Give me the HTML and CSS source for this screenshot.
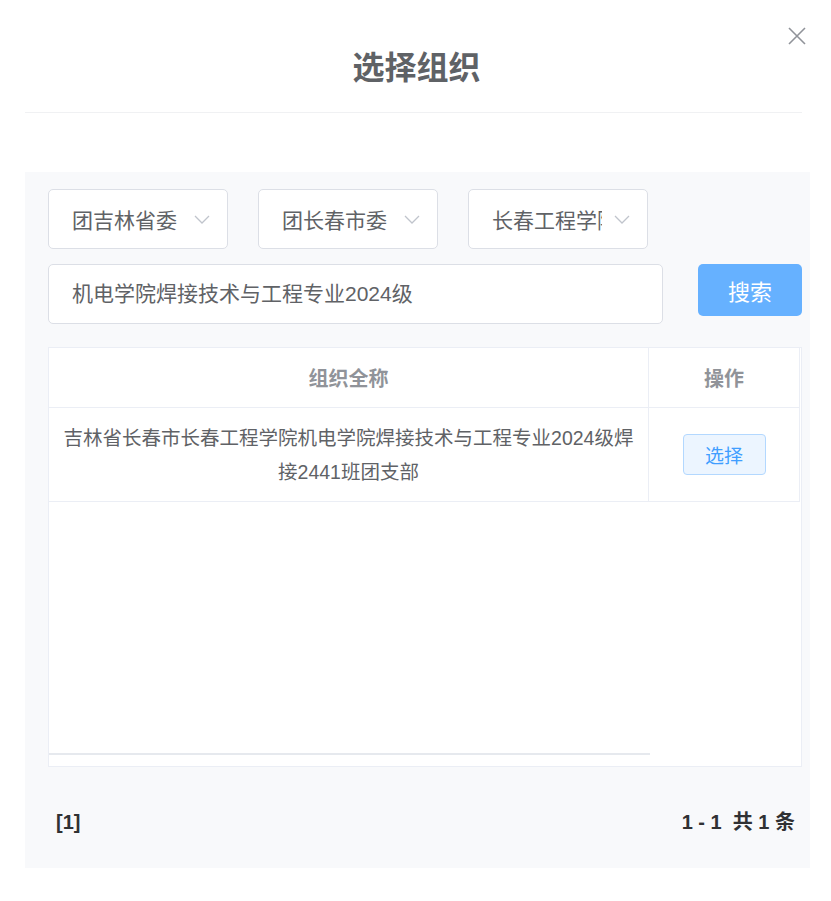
FILE: index.html
```html
<!DOCTYPE html>
<html lang="zh-CN">
  <head>
    <meta charset="UTF-8">
    <meta name="viewport" content="width=device-width, initial-scale=1.0">
    <title>选择组织</title>
    <link rel="stylesheet" href="styles.css">
  </head>
  <body>
    <div class="dialog">
        <div class="dialog-header">
            <h2 class="dialog-title">选择组织</h2>
            <button class="close-btn" aria-label="关闭">
                <svg width="18" height="18" viewBox="0 0 18 18">
                    <path d="M1 1 L17 17 M17 1 L1 17" stroke="#909399" stroke-width="1.6" fill="none"/>
                </svg>
            </button>
        </div>

        <div class="panel">
            <div class="select-row">
                <div class="select">
                    <span class="select-text">团吉林省委</span>
                    <svg class="chevron" width="16" height="9" viewBox="0 0 16 9">
                        <path d="M1 1 L8 8 L15 1" stroke="#c0c4cc" stroke-width="1.3" fill="none"/>
                    </svg>
                </div>
                <div class="select">
                    <span class="select-text">团长春市委</span>
                    <svg class="chevron" width="16" height="9" viewBox="0 0 16 9">
                        <path d="M1 1 L8 8 L15 1" stroke="#c0c4cc" stroke-width="1.3" fill="none"/>
                    </svg>
                </div>
                <div class="select">
                    <span class="select-text">长春工程学院</span>
                    <svg class="chevron" width="16" height="9" viewBox="0 0 16 9">
                        <path d="M1 1 L8 8 L15 1" stroke="#c0c4cc" stroke-width="1.3" fill="none"/>
                    </svg>
                </div>
            </div>

            <div class="search-row">
                <div class="search-input">机电学院焊接技术与工程专业2024级</div>
                <button class="search-btn">搜索</button>
            </div>

            <div class="table-wrap">
                <table class="org-table">
                    <thead>
                        <tr>
                            <th class="col-name">组织全称</th>
                            <th class="col-op">操作</th>
                        </tr>
                    </thead>
                    <tbody>
                        <tr>
                            <td class="col-name">吉林省长春市长春工程学院机电学院焊接技术与工程专业2024级焊接2441班团支部</td>
                            <td class="col-op"><button class="pick-btn">选择</button></td>
                        </tr>
                    </tbody>
                </table>
                <div class="table-fill"></div>
                <div class="scroll-bar"></div>
            </div>

            <div class="pager">
                <span class="pager-pages">[1]</span>
                <span class="pager-total">1 - 1&nbsp;&nbsp;共 1 条</span>
            </div>
        </div>
    </div>
  </body>
</html>
```

FILE: styles.css
```css
:root {
    --text-regular: #606266;
    --text-secondary: #909399;
    --border-base: #dcdfe6;
    --border-light: #ebeef5;
    --bg-panel: #f8f9fb;
    --primary: #409eff;
}

body {
    margin: 0;
    background: #fff;
    font-family: 'Liberation Sans', 'Noto Sans CJK SC', sans-serif;
    color: var(--text-regular);
}

.dialog {
    width: 785px;
    margin-left: 25px;
}

.dialog-header {
    position: relative;
    height: 113px;
    border-bottom: 1px solid #f0f1f3;
    margin-right: 8px;
    box-sizing: border-box;
    padding-top: 40px;
}

.dialog-title {
    margin: 0;
    text-align: center;
    font-size: 32px;
    line-height: 56px;
    font-weight: 700;
    color: #5f6266;
    padding-left: 6px;
}

.close-btn {
    position: absolute;
    top: 27px;
    right: -4px;
    width: 18px;
    height: 18px;
    padding: 0;
    border: none;
    background: none;
    cursor: pointer;
}

.close-btn svg {
    display: block;
}

.panel {
    margin-top: 59px;
    background: var(--bg-panel);
    padding: 17px 8px 26px 23px;
}

.select-row {
    display: flex;
    gap: 30px;
}

.select {
    width: 180px;
    height: 60px;
    box-sizing: border-box;
    background: #fff;
    border: 1px solid var(--border-base);
    border-radius: 5px;
    display: flex;
    align-items: center;
    padding: 0 17px 0 23px;
}

.select-text {
    width: 110px;
    overflow: hidden;
    white-space: nowrap;
    font-size: 21px;
    color: var(--text-regular);
}

.chevron {
    margin-left: 12px;
    flex-shrink: 0;
}

.search-row {
    display: flex;
    align-items: flex-start;
    margin-top: 15px;
}

.search-input {
    width: 615px;
    height: 60px;
    box-sizing: border-box;
    background: #fff;
    border: 1px solid var(--border-base);
    border-radius: 5px;
    padding-left: 23px;
    font-size: 21px;
    line-height: 58px;
    color: var(--text-regular);
}

.search-btn {
    margin-left: 35px;
    width: 104px;
    height: 52px;
    border: none;
    border-radius: 5px;
    background: #66b1ff;
    color: #fff;
    font-family: inherit;
    font-size: 22px;
    cursor: pointer;
}

.table-wrap {
    margin-top: 23px;
    height: 420px;
    box-sizing: border-box;
    background: #fff;
    border: 1px solid var(--border-light);
    display: flex;
    flex-direction: column;
}

.org-table {
    width: 749px;
    border-collapse: collapse;
    table-layout: fixed;
}

.org-table th,
.org-table td {
    border-bottom: 1px solid var(--border-light);
    text-align: center;
}

.org-table .col-name {
    width: 599px;
    border-right: 1px solid var(--border-light);
}

.org-table .col-op {
    width: 150px;
    border-right: 1px solid var(--border-light);
}

.org-table th {
    height: 59px;
    font-size: 20px;
    font-weight: 700;
    color: var(--text-secondary);
    padding: 0;
}

.org-table td {
    height: 94px;
    box-sizing: border-box;
    padding: 12px 11px;
    font-size: 19.5px;
    line-height: 34px;
    color: var(--text-regular);
}

.pick-btn {
    width: 83px;
    height: 41px;
    border: 1px solid #b3d8ff;
    border-radius: 4px;
    background: #ecf5ff;
    color: var(--primary);
    font-family: inherit;
    font-size: 19px;
    cursor: pointer;
}

.table-fill {
    flex: 1;
}

.scroll-bar {
    width: 601px;
    height: 2px;
    background: #e6e9ee;
    margin-bottom: 11px;
}

.pager {
    display: flex;
    justify-content: space-between;
    margin-top: 35px;
    padding: 0 7px 0 8px;
    line-height: 40px;
    font-size: 20px;
    font-weight: 700;
    color: #303133;
}
```
